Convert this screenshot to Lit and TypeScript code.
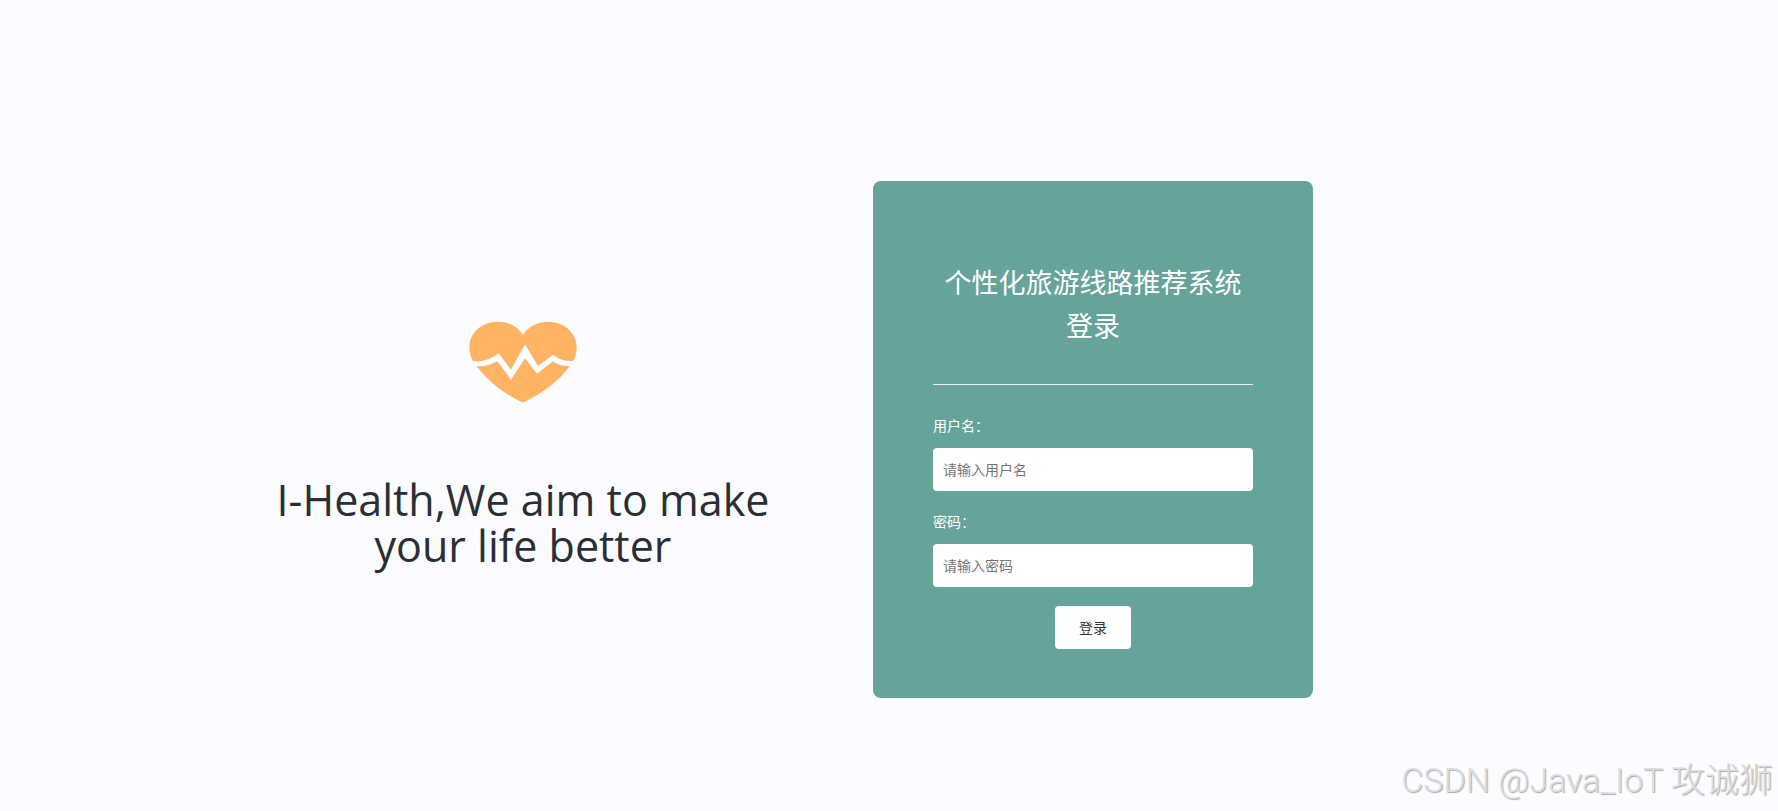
import { LitElement, html, css } from "lit";
import { customElement } from "lit/decorators.js";

@customElement("brand-panel")
class BrandPanel extends LitElement {
  static styles = css`
    :host {
      display: flex;
      flex-direction: column;
      align-items: center;
      gap: 74px;
      padding-top: 10px;
      color: #2b2e33;
      text-align: center;
    }
    .heart {
      width: 108px;
      height: 82px;
      display: block;
    }
    .slogan {
      margin: 0;
      font: 400 43px/46px "Open Sans", "Noto Sans", sans-serif;
    }
  `;

  render() {
    return html`
      <svg class="heart" viewBox="0 0 324 246" aria-hidden="true">
        <path
          fill="#ffb463"
          d="M162 41C144 14 116 2 86 2C38 2 1 36 1 78C1 94 5 108 12 121C40 123 60 117 89 97L126 146L168 70L207 135L252 101C272 117 289 120 313 120C320 107 323 94 323 78C323 36 286 2 238 2C208 2 180 14 162 41Z"
        />
        <path
          fill="#ffb463"
          d="M23 135C48 137 66 131 85 121L126 176L168 112L204 158L252 121C270 134 286 136 302 135C270 181 224 214 162 245C102 216 55 180 23 135Z"
        />
      </svg>
      <h1 class="slogan">I-Health,We aim to make your life better</h1>
    `;
  }
}

@customElement("login-card")
class LoginCard extends LitElement {
  static styles = css`
    :host {
      display: block;
      box-sizing: border-box;
      padding: 79px 60px 49px;
      border-radius: 8px;
      background: #66a49b;
      color: #fff;
      font-family: "Noto Sans CJK SC", sans-serif;
    }
    .title {
      margin: 0;
      padding-bottom: 38px;
      border-bottom: 1px solid #e4f0ee;
      font-size: 27px;
      line-height: 43px;
      font-weight: 400;
      text-align: center;
    }
    .form {
      display: flex;
      flex-direction: column;
      gap: 19px;
      padding-top: 29px;
    }
    .field {
      display: flex;
      flex-direction: column;
      gap: 12px;
    }
    .label {
      font-size: 14px;
      line-height: 22px;
    }
    .input,
    .submit {
      box-sizing: border-box;
      height: 43px;
      border: 0;
      border-radius: 4px;
      background: #fff;
      color: #333;
      font: 400 14px/22px "Noto Sans CJK SC", sans-serif;
    }
    .input {
      width: 100%;
      padding: 0 10px 2px;
    }
    .input::placeholder {
      color: #757575;
      opacity: 1;
    }
    .submit {
      align-self: center;
      padding: 0 24px 2px;
      cursor: pointer;
    }
  `;

  render() {
    return html`
      <h2 class="title">个性化旅游线路推荐系统登录</h2>
      <form class="form" @submit=${(e: Event) => e.preventDefault()}>
        <div class="field">
          <label class="label" for="username">用户名：</label>
          <input class="input" id="username" type="text" placeholder="请输入用户名" />
        </div>
        <div class="field">
          <label class="label" for="password">密码：</label>
          <input class="input" id="password" type="password" placeholder="请输入密码" />
        </div>
        <button class="submit" type="submit">登录</button>
      </form>
    `;
  }
}

@customElement("app-root")
class AppRoot extends LitElement {
  static styles = css`
    :host {
      display: block;
      position: relative;
      box-sizing: border-box;
      min-height: 100vh;
      background: #fbfcff;
    }
    .page {
      box-sizing: border-box;
      min-height: 100vh;
      padding-top: 68px;
      display: grid;
      grid-template-columns: 173fr 700fr 440fr 465fr;
      align-items: center;
    }
    .brand {
      grid-column: 2;
      padding-inline: 90px;
    }
    .card {
      grid-column: 3;
    }
    .watermark {
      position: absolute;
      right: 5px;
      bottom: 7px;
      color: #dcdde0;
      text-shadow: 1px 1px 1px #aaa;
      font: 300 34px/48px Roboto, "Noto Sans CJK SC", sans-serif;
      white-space: nowrap;
    }
  `;

  render() {
    return html`
      <main class="page">
        <brand-panel class="brand"></brand-panel>
        <login-card class="card"></login-card>
      </main>
      <div class="watermark">CSDN @Java_IoT 攻诚狮</div>
    `;
  }
}
